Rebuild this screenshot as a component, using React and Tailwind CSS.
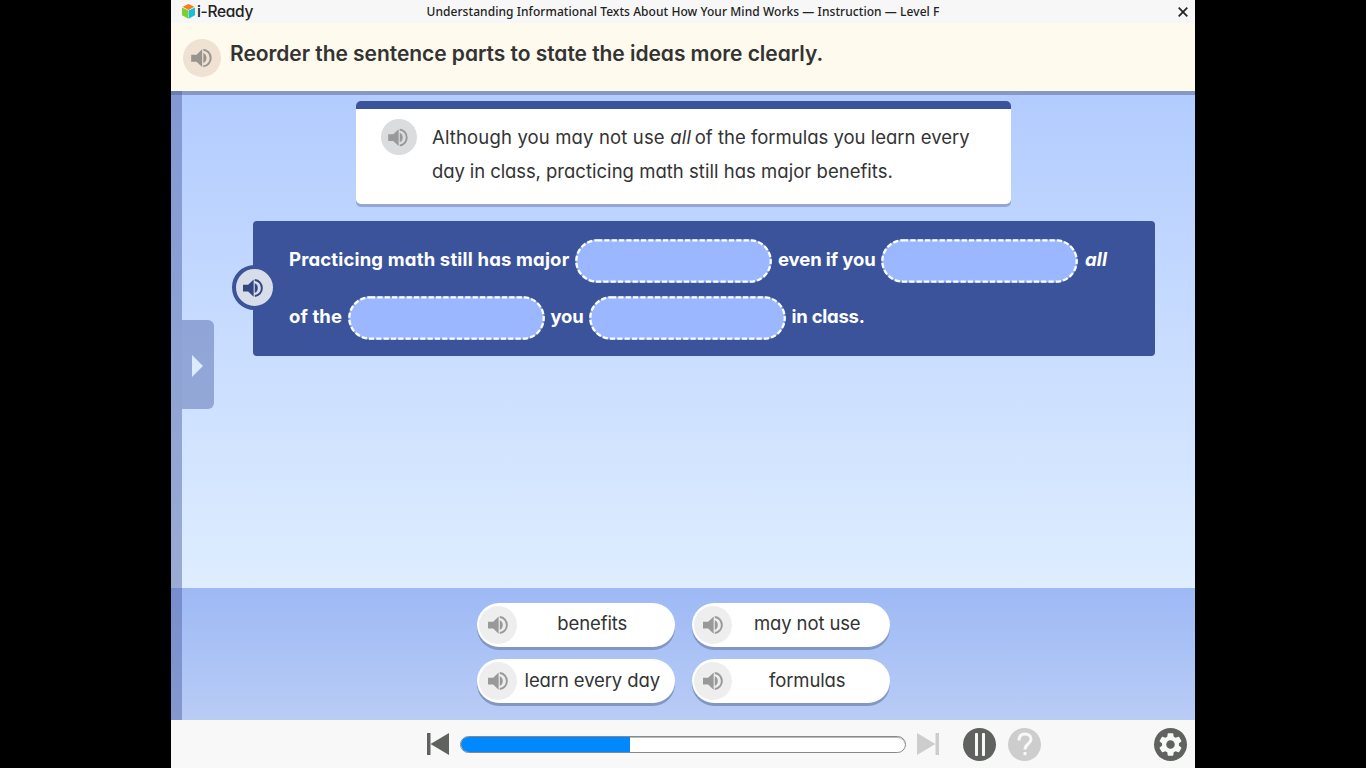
import React from 'react';

// ============================================================================
// 1. ICONS
// ============================================================================

const SpeakerIcon = ({ className }) => (
  <svg viewBox="0 0 62 60" className={className} fill="currentColor">
    <path d="M0 20h16L33 4v53L16 41H0z" />
    <path d="M36.500 15c6 2 9.500 8 9.500 15s-3.500 13-9.500 15z" />
    <path d="M36.500 5c13 1 22 12 22 25s-9 24-22 25" fill="none" stroke="currentColor" strokeWidth="6" />
  </svg>
);

const CubeLogo = () => (
  <svg viewBox="0 0 39 45" className="h-[15px] w-[13px] shrink-0">
    <path d="M19.500 0 37 8.500 19.500 18 2 8.500z" fill="#ff7a1c" />
    <path d="M0 10.500l19 9v25L0 34z" fill="#7bd02c" />
    <path d="M39 10.500l-19 9v25L39 34z" fill="#19bfd2" />
  </svg>
);

const SkipIcon = ({ className }) => (
  <svg viewBox="0 0 22 22" className={className} fill="currentColor">
    <path d="M0 0h3.500v22H0zM22 0v22L3.500 11z" />
  </svg>
);

const GearIcon = () => (
  <svg viewBox="0 0 24 24" className="h-[27px] w-[27px]" fill="#f8f8f8">
    <path d="M19.430 12.980c.04-.32.07-.64.07-.98s-.03-.66-.07-.98l2.110-1.650c.19-.15.24-.42.12-.64l-2-3.460c-.12-.22-.39-.3-.61-.22l-2.490 1c-.52-.4-1.080-.73-1.690-.98l-.38-2.650C14.460 2.180 14.250 2 14 2h-4c-.25 0-.46.18-.49.42l-.38 2.650c-.61.25-1.170.59-1.690.98l-2.490-1c-.23-.09-.49 0-.61.22l-2 3.460c-.13.22-.07.49.12.64l2.110 1.650c-.04.32-.07.65-.07.98s.03.66.07.98l-2.110 1.650c-.19.15-.24.42-.12.64l2 3.460c.12.22.39.3.61.22l2.490-1c.52.4 1.080.73 1.690.98l.38 2.650c.03.24.24.42.49.42h4c.25 0 .46-.18.49-.42l.38-2.650c.61-.25 1.170-.59 1.690-.98l2.490 1c.23.09.49 0 .61-.22l2-3.460c.12-.22.07-.49-.12-.64zM12 15.800a3.800 3.800 0 1 1 0-7.600 3.800 3.800 0 0 1 0 7.600z" />
  </svg>
);

// ============================================================================
// 2. ACTIVITY PIECES
// ============================================================================

// Empty drop target with a dashed pill outline
const Blank = () => (
  <svg viewBox="0 0 197 44" className="h-[44px] w-[197px] shrink-0">
    <rect x="0.300" y="0.300" width="196.400" height="43.400" rx="21.700" fill="#7f9ce6" />
    <rect x="1.300" y="1.300" width="194.400" height="41.400" rx="20.700" fill="#9bb7ff" stroke="#fff" strokeWidth="2.300" strokeDasharray="5.200 2.130" />
  </svg>
);

const WordTile = ({ label }) => (
  <button className="flex h-[44px] w-[198px] items-center rounded-full bg-white pl-[2.500px] text-[#333] shadow-[0_3px_0_#8196c3]">
    <span className="flex h-[38px] w-[38px] shrink-0 items-center justify-center rounded-full bg-[#eee]">
      <SpeakerIcon className="h-[20px] w-[20px] text-[#999]" />
    </span>
    <span className="mb-[3px] flex-1 whitespace-nowrap pr-[7px] text-center text-[18.500px] leading-[28px] tracking-[-0.120px]">{label}</span>
  </button>
);

const tiles = ['benefits', 'may not use', 'learn every day', 'formulas'];

// ============================================================================
// 3. LESSON PLAYER
// ============================================================================

export default function App() {
  return (
    <div className="flex h-[768px] w-[1366px] justify-center overflow-hidden bg-black font-['Inter','Lato',sans-serif] [font-feature-settings:'cv11']">
      <div className="flex w-[1024px] flex-col bg-[#f8f8f8] text-[#333]">
        <header className="grid h-[23px] shrink-0 grid-cols-[250px_1fr_250px] items-center bg-[#f7f7f7]">
          <div className="flex items-center gap-[2px] pl-[11px]">
            <CubeLogo />
            <span className="whitespace-nowrap text-[15.500px] font-medium leading-[22px] tracking-[-0.300px] text-[#222]">i-Ready</span>
          </div>
          <h1 className="whitespace-nowrap text-center font-['Noto_Sans',sans-serif] text-[12px] font-medium leading-[22px] tracking-[0.060px] text-[#222]">
            Understanding Informational Texts About How Your Mind Works — Instruction — Level F
          </h1>
          <svg viewBox="0 0 10 10" className="mr-[7.500px] h-[10px] w-[10px] justify-self-end" stroke="#222" strokeWidth="1.700">
            <path d="M.7.7l8.600 8.600M9.300.7L.7 9.300" />
          </svg>
        </header>

        <section className="flex h-[68px] shrink-0 bg-[#fffaee] pl-[12px]">
          <span className="mt-[15.500px] flex h-[38px] w-[38px] items-center justify-center rounded-full bg-[#f0e2d2]">
            <SpeakerIcon className="mr-px h-[20px] w-[21px] text-[#98958f]" />
          </span>
          <h2 className="ml-[9px] mt-[15px] whitespace-nowrap text-[21px] font-semibold leading-[32px] tracking-[-0.050px] text-[#333]">
            Reorder the sentence parts to state the ideas more clearly.
          </h2>
        </section>

        <main className="relative flex h-[629px] shrink-0 flex-col border-t-4 border-[#8799c2]">
          <div className="h-[493px] bg-linear-to-b from-[#b3ccff] to-[#deedff] pt-[6px]">
            <article className="ml-[184.500px] flex h-[103px] w-[655.500px] rounded-[5px] border-t-8 border-[#3b539b] bg-white pl-[25.500px] shadow-[0_3px_0_#94a7d2]">
              <span className="mt-[10px] flex h-[36px] w-[36px] items-center justify-center rounded-full bg-[#dbdcde]">
                <SpeakerIcon className="mr-[2px] h-[19px] w-[20px] text-[#999]" />
              </span>
              <p className="ml-[15px] mt-[11px] whitespace-nowrap text-[18.500px] leading-[34px]">
                <span className="tracking-[0.150px]">Although you may not use </span>
                <em className="mr-[-1.500px] tracking-[0.200px]">all</em> of the formulas you learn every
                <br />
                <span className="tracking-[-0.100px]">day in class, </span>
                <span className="tracking-[0.030px]">practicing math still has major benefits.</span>
              </p>
            </article>

            <article className="relative ml-[82px] mt-[16.500px] h-[135px] w-[901.500px] rounded-[4px] bg-[#3b539b] pl-[36px] pt-[18px] text-[18.500px] font-bold leading-[28px] text-white">
              <span className="absolute left-[-21.500px] top-[44.500px] flex h-[45px] w-[45px] items-center justify-center rounded-full border-4 border-[#3b539b] bg-[#d8ddea]">
                <SpeakerIcon className="mr-[2px] h-[20px] w-[20px] text-[#334680]" />
              </span>
              <div className="flex h-[44px] whitespace-nowrap">
                <span className="w-[286px] pt-[6px] tracking-[0.170px]">Practicing math still has major</span>
                <Blank />
                <span className="w-[109px] pl-[6px] pt-[6px] tracking-[-0.100px]">even if you</span>
                <Blank />
                <em className="pl-[7px] pt-[6px] tracking-[0.200px]">all</em>
              </div>
              <div className="mt-[13px] flex h-[44px] whitespace-nowrap">
                <span className="w-[58.500px] pt-[6px] tracking-[0.100px]">of the</span>
                <Blank />
                <span className="w-[44px] pl-[6px] pt-[6px] tracking-[-0.200px]">you</span>
                <Blank />
                <span className="pl-[6px] pt-[6px] tracking-[-0.250px]">in class.</span>
              </div>
            </article>
          </div>

          <div className="flex h-[132px] justify-center bg-linear-to-b from-[#9db9f5] to-[#b9ccf5] pt-[14.500px]">
            <div className="grid h-[100.500px] grid-cols-[198px_198px] content-between gap-x-[17px]">
              {tiles.map((label) => (
                <WordTile key={label} label={label} />
              ))}
            </div>
          </div>

          {/* Collapsed side drawer and its handle */}
          <div className="absolute -top-1 bottom-0 left-0 w-[11px] bg-[#465ca0]/45" />
          <button className="absolute left-[11px] top-[224.500px] flex h-[89px] w-[31.500px] items-center rounded-r-[6px] bg-[#5a6eb0]/50 pl-[10px]">
            <svg viewBox="0 0 11 22" className="mt-[3px] h-[22px] w-[11px]">
              <path d="M0 0l11 11L0 22z" fill="#dcebff" />
            </svg>
          </button>
        </main>

        <footer className="flex h-[48px] shrink-0 items-center bg-[#f8f8f8] pl-[256px] pr-[7px]">
          <SkipIcon className="h-[22px] w-[22px] text-[#60625f]" />
          <div className="ml-[11px] h-[17px] w-[446px] overflow-hidden rounded-full border border-[#888] bg-white shadow-[inset_0_1px_0_#bbb]">
            <div className="h-full w-[169px] bg-[#0088ff]" />
          </div>
          <SkipIcon className="ml-[11px] h-[22px] w-[22px] rotate-180 text-[#cdcdcd]" />
          <span className="ml-[24px] flex h-[33px] w-[33px] items-center justify-center gap-[4px] rounded-full bg-[#60625f]">
            <i className="h-[23px] w-[3px] rounded-[1px] bg-[#f8f8f8]" />
            <i className="h-[23px] w-[3px] rounded-[1px] bg-[#f8f8f8]" />
          </span>
          <span className="ml-[12px] flex h-[33px] w-[33px] items-center justify-center rounded-full bg-[#cdcdcd]">
            <svg viewBox="0 0 16 24" className="h-[24px] w-[16px]" fill="none" stroke="#f8f8f8" strokeWidth="3">
              <path d="M2 8.500C2 4 4.500 2 8 2s6 2 6 5.200c0 4.800-6 4.800-6 10.300M8 20v3.200" />
            </svg>
          </span>
          <span className="ml-auto mr-[1px] flex h-[33px] w-[33px] items-center justify-center rounded-full bg-[#60625f]">
            <GearIcon />
          </span>
        </footer>
      </div>
    </div>
  );
}
